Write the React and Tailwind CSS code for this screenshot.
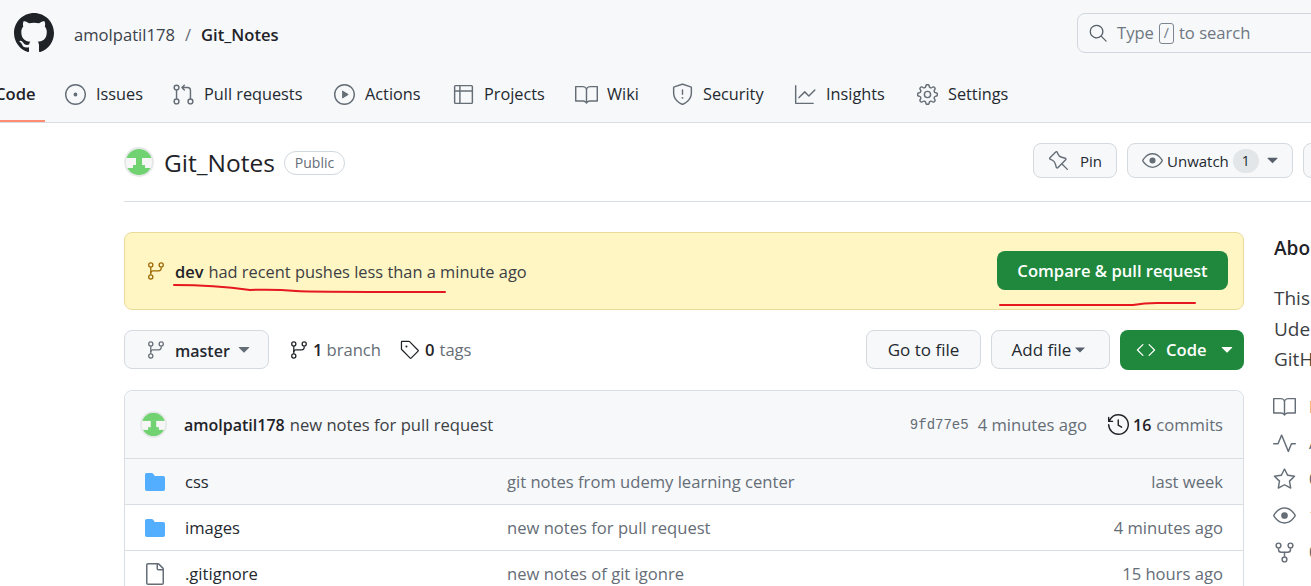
import {
  GoIssueOpened,
  GoGitPullRequest,
  GoPlay,
  GoTable,
  GoBook,
  GoShield,
  GoGraph,
  GoGear,
  GoSearch,
  GoPin,
  GoEye,
  GoTriangleDown,
  GoGitBranch,
  GoTag,
  GoCode,
  GoHistory,
  GoFileDirectoryFill,
  GoFile,
  GoPulse,
  GoStar,
  GoRepoForked,
} from "react-icons/go";

const tabs = [
  { label: "Issues", icon: GoIssueOpened, width: "w-[108px]" },
  { label: "Pull requests", icon: GoGitPullRequest, width: "w-[161px]" },
  { label: "Actions", icon: GoPlay, width: "w-[119px]" },
  { label: "Projects", icon: GoTable, width: "w-[123px]" },
  { label: "Wiki", icon: GoBook, width: "w-[96px]" },
  { label: "Security", icon: GoShield, width: "w-[123px]" },
  { label: "Insights", icon: GoGraph, width: "w-[122px]" },
  { label: "Settings", icon: GoGear, width: "w-[122px]" },
];

const files = [
  { name: "css", icon: "dir", message: "git notes from udemy learning center", time: "last week", bg: "bg-[#f6f8fa]" },
  { name: "images", icon: "dir", message: "new notes for pull request", time: "4 minutes ago", bg: "bg-white" },
  { name: ".gitignore", icon: "file", message: "new notes of git igonre", time: "15 hours ago", bg: "bg-white" },
];

const aboutLinks = [
  { icon: GoBook, text: "Readme", cls: "text-[#cf4a4a]" },
  { icon: GoPulse, text: "Activity", cls: "text-[#57606a]" },
  { icon: GoStar, text: "0 stars", cls: "text-[#57606a]" },
  { icon: GoEye, text: "1 watching", cls: "text-[#57606a]" },
  { icon: GoRepoForked, text: "0 forks", cls: "text-[#57606a]" },
];

function GithubMark({ className }) {
  return (
    <svg width="40" height="40" viewBox="0 0 16 16" fill="currentColor" className={className}>
      <path d="M8 0C3.58 0 0 3.58 0 8c0 3.54 2.29 6.53 5.47 7.59.4.07.55-.17.55-.38 0-.19-.01-.82-.01-1.49-2.01.37-2.53-.49-2.69-.94-.09-.23-.48-.94-.82-1.13-.28-.15-.68-.52-.01-.53.63-.01 1.08.58 1.23.82.72 1.21 1.87.87 2.33.66.07-.52.28-.87.51-1.07-1.78-.2-3.64-.89-3.64-3.95 0-.87.31-1.59.82-2.15-.08-.2-.36-1.02.08-2.12 0 0 .67-.21 2.2.82.64-.18 1.32-.27 2-.27.68 0 1.36.09 2 .27 1.53-1.04 2.2-.82 2.2-.82.44 1.1.16 1.92.08 2.12.51.56.82 1.27.82 2.15 0 3.07-1.87 3.75-3.65 3.95.29.25.54.73.54 1.48 0 1.07-.01 1.93-.01 2.2 0 .21.15.46.55.38A8.013 8.013 0 0016 8c0-4.42-3.58-8-8-8z" />
    </svg>
  );
}

function Avatar({ size }) {
  return (
    <svg width={size} height={size} viewBox="0 0 30 30" className="shrink-0">
      <defs>
        <clipPath id="avatar-clip">
          <circle cx="15" cy="15" r="13" />
        </clipPath>
      </defs>
      <circle cx="15" cy="15" r="15" fill="#e6e8ea" />
      <circle cx="15" cy="15" r="13" fill="#f5f6f5" />
      <g clipPath="url(#avatar-clip)" fill="#70d270">
        <rect x="0" y="2" width="30" height="9" />
        <rect x="12" y="11" width="6" height="10" />
        <rect x="9" y="18" width="12" height="3" />
        <rect x="0" y="21" width="30" height="7" />
      </g>
    </svg>
  );
}

function SmallButton({ children, className }) {
  return (
    <div className={`flex h-[35px] shrink-0 items-center rounded-lg border border-[#d5dae0] bg-[#f6f8fa] text-[15px] font-medium text-[#24292f] ${className}`}>
      {children}
    </div>
  );
}

function Tab({ tab }) {
  const Icon = tab.icon;
  return (
    <div className={`flex shrink-0 items-center ${tab.width}`}>
      <Icon size={23} className="-ml-[1px] mr-[9px] text-[#656d76]" />
      <span className="whitespace-nowrap text-[16.3px]">{tab.label}</span>
    </div>
  );
}

function Header() {
  return (
    <header className="h-[123px] overflow-hidden border-b border-[#d8dee4] bg-[#f6f8fa]">
      <div className="flex h-[66px] items-center">
        <GithubMark className="ml-[14px] shrink-0 text-[#1f2328]" />
        <div className="ml-[20px] mt-[3px] flex items-center">
          <span className="text-[#3b424a]">amolpatil178</span>
          <span className="mx-[10px] text-[#656d76]">/</span>
          <span className="font-semibold text-[#1f2328]">Git_Notes</span>
        </div>
        <div className="ml-auto -mr-[66px] flex h-[40px] w-[300px] shrink-0 items-center rounded-lg border border-[#d0d7de] pl-[10px] text-[#6e7781]">
          <GoSearch size={20} className="mr-[9px] text-[#57606a]" />
          <span>Type</span>
          <span className="mx-[5px] flex h-[21px] w-[15px] items-center justify-center rounded-[3px] border border-[#7d8590] text-[14px]">/</span>
          <span>to search</span>
        </div>
      </div>
      <nav className="flex h-[56px] items-start pt-[16px] text-[#24292f]">
        <div className="relative -ml-[5px] mr-[20px] flex h-[40px] w-[50px] shrink-0 items-start justify-start font-semibold text-[#1f2328]">
          <span>Code</span>
          <div className="absolute bottom-0 left-0 h-[2px] w-full bg-[#fd8c73]"></div>
        </div>
        {tabs.map((tab) => (
          <Tab key={tab.label} tab={tab} />
        ))}
      </nav>
    </header>
  );
}

function TitleRow() {
  return (
    <div className="ml-[124px] flex h-[79px] items-start border-b border-[#d8dee4] pt-[20px]">
      <div className="flex w-[909px] shrink-0 items-start">
        <div className="mt-[4px]">
          <Avatar size={30} />
        </div>
        <span className="ml-[10px] mt-[4px] w-[110px] whitespace-nowrap text-[24.5px] leading-[32px] font-medium text-[#1f2328]">Git_Notes</span>
        <span className="ml-[10px] mt-[8px] flex h-[24px] w-[61px] shrink-0 items-center justify-center rounded-full border border-[#d0d7de] text-[14px] font-medium text-[#656d76]">
          Public
        </span>
      </div>
      <div className="flex shrink-0 gap-[10px]">
        <SmallButton className="w-[84px] pl-[14px]">
          <GoPin size={22} className="mr-[10px] text-[#656d76]" />
          Pin
        </SmallButton>
        <SmallButton className="w-[166px] pl-[14px]">
          <GoEye size={21} className="mr-[4px] text-[#656d76]" />
          Unwatch
          <span className="ml-[4px] flex h-[24px] w-[26px] items-center justify-center rounded-full bg-[#e3e6e9] text-[14px] text-[#24292f]">1</span>
          <GoTriangleDown size={19} className="ml-[4px] text-[#57606a]" />
        </SmallButton>
        <SmallButton className="w-[100px]"></SmallButton>
      </div>
    </div>
  );
}

function Banner() {
  return (
    <div className="relative flex h-[78px] items-center rounded-lg border border-[#eadb9b] bg-[#fff6c4] pl-[21px] pr-[15px]">
      <GoGitBranch size={20} className="mr-[9px] text-[#9a6700]" />
      <div className="mt-[2px] flex items-center text-[16.4px]">
        <span className="font-semibold text-[#1f2328]">dev</span>
        <span className="ml-[5px] text-[#3c4043]">had recent pushes less than a minute ago</span>
      </div>
      <div className="mb-[2px] ml-auto flex h-[39px] w-[231px] items-center justify-center rounded-lg bg-[#1f883d] pt-[4px] pb-[2px] font-semibold text-white">
        Compare &amp; pull request
      </div>
      {/* red pen marks scribbled over the screenshot */}
      <svg className="absolute -left-px -top-px h-[78px] w-[1120px]" viewBox="0 0 1120 78" fill="none" stroke="#e5171f" strokeWidth="2" strokeLinecap="round">
        <path d="M50 53 Q90 53 126 58 Q150 57 172 59 Q180 60 321 60" />
        <path d="M876 73 L1009 73 Q1020 71 1033 71 L1071 71" />
      </svg>
    </div>
  );
}

function BranchRow() {
  return (
    <div className="mt-[20px] flex h-[40px] items-start">
      <div className="flex h-[39px] w-[145px] items-center rounded-lg border border-[#d5dae0] bg-[#f6f8fa] pl-[21px] text-[16px] font-semibold text-[#24292f]">
        <GoGitBranch size={20} className="mr-[9px] text-[#656d76]" />
        <span className="pt-[2px]">master</span>
        <GoTriangleDown size={20} className="ml-[4px] text-[#656d76]" />
      </div>
      <div className="ml-[20px] flex h-[39px] items-center text-[#656d76]">
        <GoGitBranch size={20} className="mr-[4px] text-[#1f2328]" />
        <span className="font-semibold text-[#1f2328]">1</span>
        <span className="ml-[4px]">branch</span>
        <GoTag size={20} className="ml-[19px] mr-[5px] text-[#1f2328]" />
        <span className="font-semibold text-[#1f2328]">0</span>
        <span className="ml-[5px]">tags</span>
      </div>
      <div className="ml-auto flex h-[39px] w-[115px] items-center justify-center rounded-lg border border-[#d5dae0] bg-[#f6f8fa] text-[17px] font-medium text-[#24292f]">
        Go to file
      </div>
      <div className="ml-[10px] flex h-[39px] w-[119px] items-center justify-center rounded-lg border border-[#d5dae0] bg-[#f6f8fa] text-[17px] font-medium text-[#24292f]">
        Add file
        <GoTriangleDown size={18} className="text-[#57606a]" />
      </div>
      <div className="ml-[10px] flex h-[40px] w-[124px] items-center rounded-lg bg-[#1f883d] pl-[16px] font-semibold text-white">
        <GoCode size={20} className="mr-[10px]" />
        Code
        <GoTriangleDown size={20} className="ml-[10px]" />
      </div>
    </div>
  );
}

function FileTable() {
  return (
    <div className="mt-[20px] rounded-t-lg border border-[#d8dee4]">
      <div className="flex h-[67px] items-center rounded-t-lg bg-[#f6f8fa] pl-[15px] pr-[20px]">
        <Avatar size={27} />
        <span className="ml-[17px] text-[16px] font-semibold text-[#1f2328]">amolpatil178</span>
        <span className="ml-[5px] text-[#3c4043]">new notes for pull request</span>
        <span className="ml-auto font-['Liberation_Mono',monospace] text-[14px] text-[#656d76]">9fd77e5</span>
        <span className="ml-[9px] text-[#656d76]">4 minutes ago</span>
        <GoHistory size={23} className="ml-[20px] mr-[3px] text-[#1f2328]" />
        <span className="text-[16px] font-semibold text-[#1f2328]">16</span>
        <span className="ml-[5px] text-[#656d76]">commits</span>
      </div>
      {files.map((file) => (
        <div key={file.name} className={`flex h-[46px] items-center border-t border-[#d8dee4] pl-[18px] pr-[20px] ${file.bg}`}>
          {file.icon === "dir" ? (
            <GoFileDirectoryFill size={24} className="text-[#54aeff]" />
          ) : (
            <GoFile size={24} className="text-[#656d76]" />
          )}
          <span className="ml-[18px] w-[322px] text-[#24292f]">{file.name}</span>
          <span className="text-[#656d76]">{file.message}</span>
          <span className="ml-auto text-[#656d76]">{file.time}</span>
        </div>
      ))}
    </div>
  );
}

function About() {
  return (
    <aside className="w-[300px] shrink-0">
      <h2 className="pt-[4px] text-[19px] font-semibold leading-[24px] text-[#1f2328]">About</h2>
      <div className="mt-[23px] whitespace-nowrap text-[19px] leading-[30.5px] text-[#3c4043]">
        <p>This repo has notes from</p>
        <p>Udemy course on Git and</p>
        <p>GitHub</p>
      </div>
      <ul className="mt-[14px]">
        {aboutLinks.map((link) => {
          const Icon = link.icon;
          return (
            <li key={link.text} className="flex h-[36.4px] items-center">
              <Icon size={23} className="-ml-[1px] mr-[13px] shrink-0 text-[#656d76]" />
              <span className={`whitespace-nowrap ${link.cls}`}>{link.text}</span>
            </li>
          );
        })}
      </ul>
    </aside>
  );
}

export default function App() {
  return (
    <div className="h-[586px] w-[1311px] overflow-hidden bg-white font-['Open_Sans','Noto_Sans',sans-serif] text-[16.6px] leading-[24px]">
      <Header />
      <TitleRow />
      <main className="ml-[124px] mt-[30px] flex gap-[30px]">
        <div className="w-[1120px] shrink-0">
          <Banner />
          <BranchRow />
          <FileTable />
        </div>
        <About />
      </main>
    </div>
  );
}
